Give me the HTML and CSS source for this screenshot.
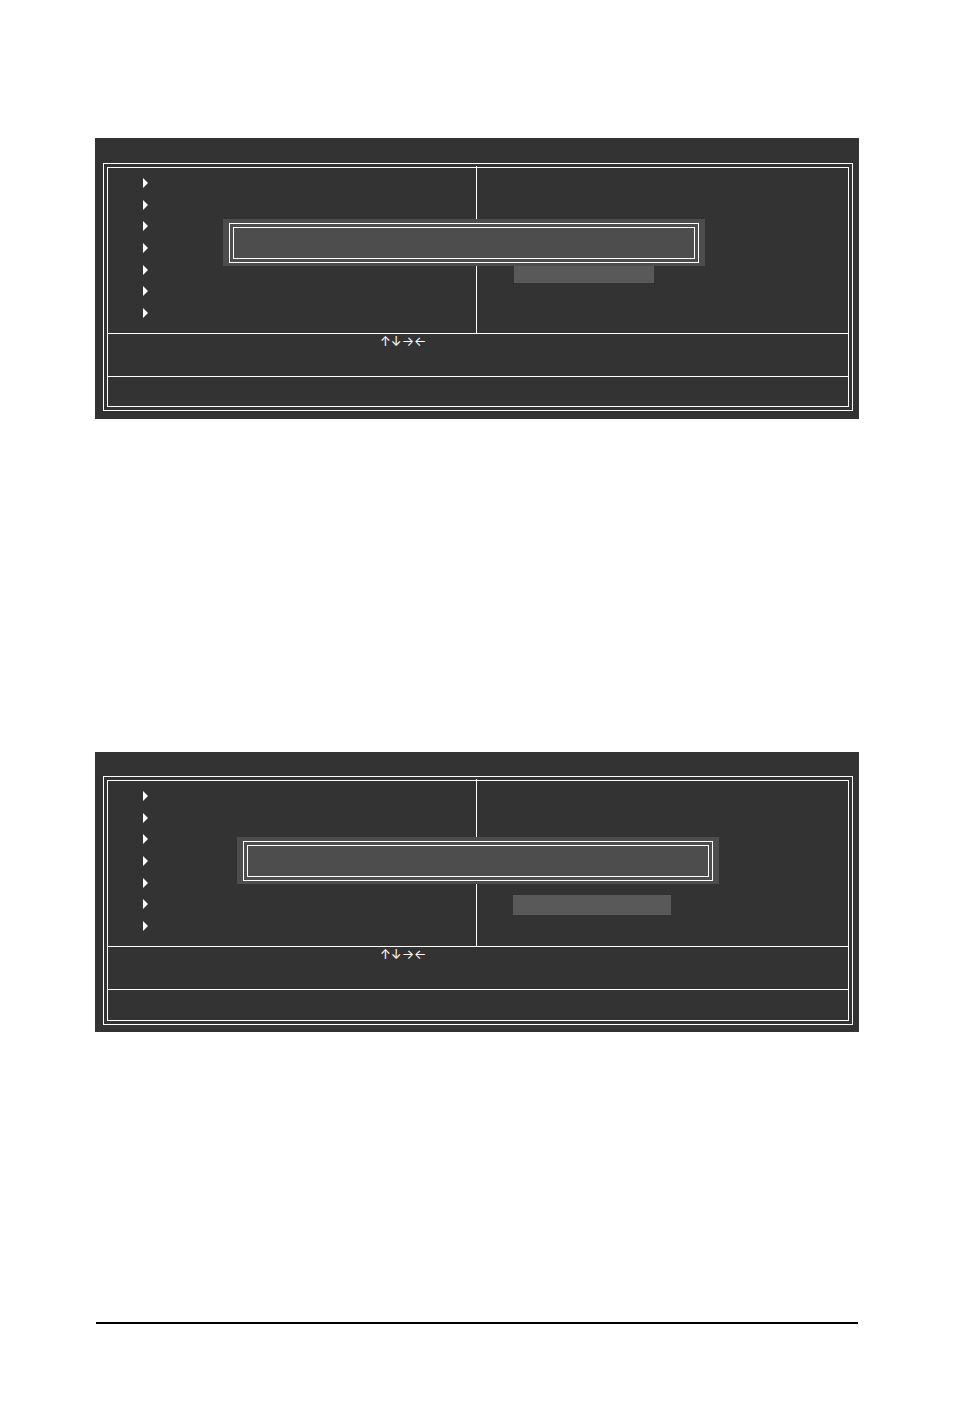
FILE: index.html
```html
<!DOCTYPE html>
<html lang="en">
<head>
  <meta charset="UTF-8" />
  <meta name="viewport" content="width=device-width, initial-scale=1.0"/>
  <title>CMOS Setup</title>
  <link rel="stylesheet" href="styles.css">
</head>
<body>
  <main class="page">

    <section class="screen screen-first">
      <div class="frame">
        <div class="frame-inner">
          <div class="columns">
            <ul class="menu">
              <li><svg class="marker" viewBox="0 0 5 10"><path d="M0 0L5 5L0 10Z"/></svg></li>
              <li><svg class="marker" viewBox="0 0 5 10"><path d="M0 0L5 5L0 10Z"/></svg></li>
              <li><svg class="marker" viewBox="0 0 5 10"><path d="M0 0L5 5L0 10Z"/></svg></li>
              <li><svg class="marker" viewBox="0 0 5 10"><path d="M0 0L5 5L0 10Z"/></svg></li>
              <li><svg class="marker" viewBox="0 0 5 10"><path d="M0 0L5 5L0 10Z"/></svg></li>
              <li><svg class="marker" viewBox="0 0 5 10"><path d="M0 0L5 5L0 10Z"/></svg></li>
              <li><svg class="marker" viewBox="0 0 5 10"><path d="M0 0L5 5L0 10Z"/></svg></li>
            </ul>
            <div class="options">
              <div class="selected"></div>
            </div>
            <div class="dialog">
              <div class="dialog-frame"><div class="dialog-inner"></div></div>
            </div>
          </div>
          <div class="keys">↑↓→←</div>
          <div class="hint"></div>
        </div>
      </div>
    </section>

    <section class="screen screen-second">
      <div class="frame">
        <div class="frame-inner">
          <div class="columns">
            <ul class="menu">
              <li><svg class="marker" viewBox="0 0 5 10"><path d="M0 0L5 5L0 10Z"/></svg></li>
              <li><svg class="marker" viewBox="0 0 5 10"><path d="M0 0L5 5L0 10Z"/></svg></li>
              <li><svg class="marker" viewBox="0 0 5 10"><path d="M0 0L5 5L0 10Z"/></svg></li>
              <li><svg class="marker" viewBox="0 0 5 10"><path d="M0 0L5 5L0 10Z"/></svg></li>
              <li><svg class="marker" viewBox="0 0 5 10"><path d="M0 0L5 5L0 10Z"/></svg></li>
              <li><svg class="marker" viewBox="0 0 5 10"><path d="M0 0L5 5L0 10Z"/></svg></li>
              <li><svg class="marker" viewBox="0 0 5 10"><path d="M0 0L5 5L0 10Z"/></svg></li>
            </ul>
            <div class="options">
              <div class="selected"></div>
            </div>
            <div class="dialog">
              <div class="dialog-frame"><div class="dialog-inner"></div></div>
            </div>
          </div>
          <div class="keys">↑↓→←</div>
          <div class="hint"></div>
        </div>
      </div>
    </section>

    <hr class="page-rule">
  </main>
</body>
</html>
```

FILE: styles.css
```css
* {
  box-sizing: border-box;
}

body {
  margin: 0;
  background-color: #fff;
  font-family: 'Inter', 'Liberation Sans', sans-serif;
}

.page {
  padding: 138px 95px 94px;
}

/* Setup screens */
.screen {
  padding: 25px 6px 8px 8px;
  background-color: #333;
  color: #fff;
}

.screen-second {
  margin-top: 333px;
  padding-top: 24px;
  padding-bottom: 7px;
}

.frame {
  border: 1px solid #fff;
  padding: 3px;
}

.frame-inner {
  border: 1px solid #fff;
}

.columns {
  position: relative;
  display: grid;
  grid-template-columns: 369fr 371fr;
  height: 165px;
}

/* the divider runs slightly over the top border */
.menu {
  display: flex;
  flex-direction: column;
  justify-content: space-between;
  list-style: none;
  margin: -2px 0 0;
  padding: 12px 35px 15px;
  border-right: 1px solid #fff;
}

.marker {
  display: block;
  width: 5px;
  height: 10px;
  fill: #fff;
}

.options {
  padding: 95px 37px 0;
}

.screen-second .options {
  padding: 114px 36px 0;
}

.selected {
  width: 140px;
  height: 20px;
  background-color: #595959;
}

.screen-second .selected {
  width: 158px;
}

.keys {
  height: 43px;
  padding-left: 272px;
  border-top: 1px solid #fff;
  font-size: 13px;
  line-height: 14px;
}

.hint {
  height: 30px;
  border-top: 1px solid #fff;
}

.screen-second .hint {
  height: 31px;
}

/* Message box over the menu */
.dialog {
  position: absolute;
  top: 51px;
  left: 115px;
  right: 143px;
  padding: 4px 6px 3px;
  background-color: #4d4d4d;
}

.screen-second .dialog {
  top: 56px;
  left: 129px;
  right: 129px;
}

.dialog-frame {
  padding: 3px;
  border: 1px solid #fff;
}

.dialog-inner {
  height: 32px;
  border: 1px solid #fff;
}

.page-rule {
  height: 2px;
  margin: 290px 1px 0;
  border: none;
  background-color: #000;
}
```
